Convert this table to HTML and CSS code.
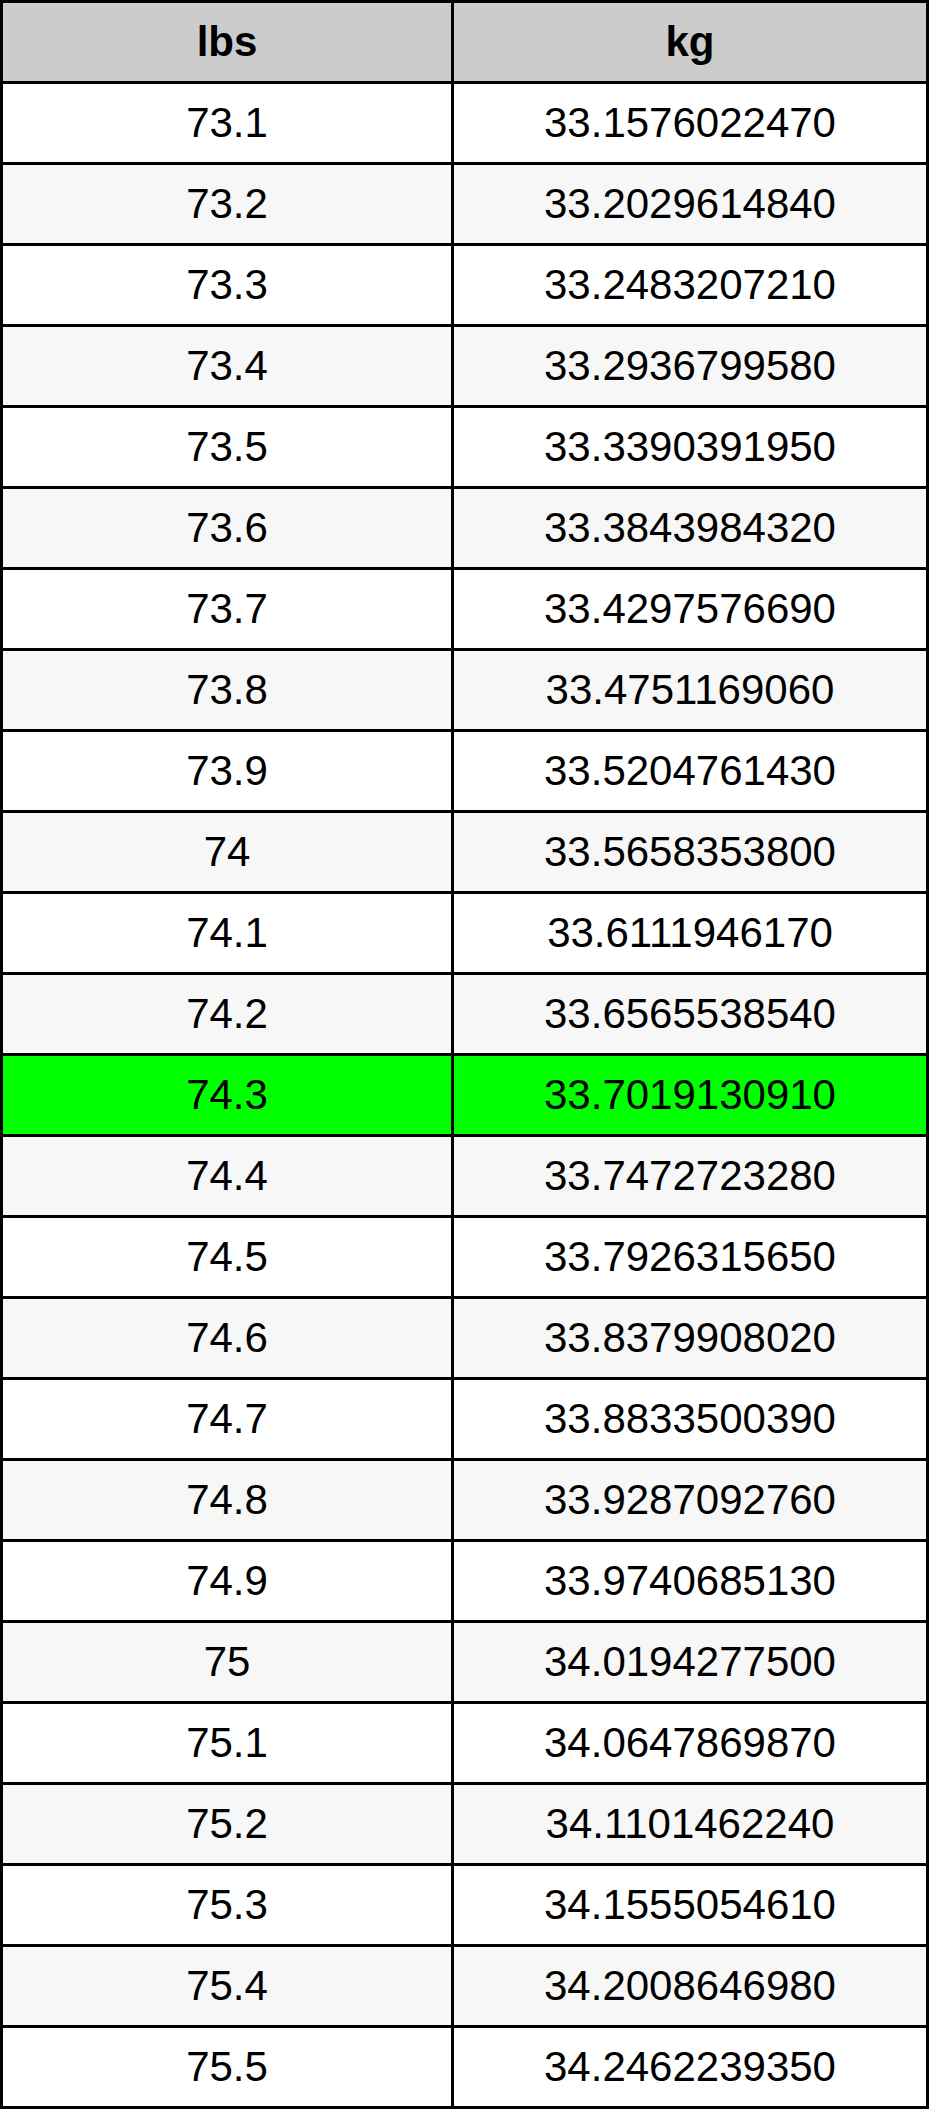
FILE: index.html
```html
<!DOCTYPE html>
<html>
<head>
<meta charset="utf-8">
<link rel="stylesheet" href="styles.css">
</head>
<body>
<table class="conv">
<thead>
<tr><th class="c1">lbs</th><th class="c2">kg</th></tr>
</thead>
<tbody>
<tr><td>73.1</td><td>33.1576022470</td></tr>
<tr class="alt"><td>73.2</td><td>33.2029614840</td></tr>
<tr><td>73.3</td><td>33.2483207210</td></tr>
<tr class="alt"><td>73.4</td><td>33.2936799580</td></tr>
<tr><td>73.5</td><td>33.3390391950</td></tr>
<tr class="alt"><td>73.6</td><td>33.3843984320</td></tr>
<tr><td>73.7</td><td>33.4297576690</td></tr>
<tr class="alt"><td>73.8</td><td>33.4751169060</td></tr>
<tr><td>73.9</td><td>33.5204761430</td></tr>
<tr class="alt"><td>74</td><td>33.5658353800</td></tr>
<tr><td>74.1</td><td>33.6111946170</td></tr>
<tr class="alt"><td>74.2</td><td>33.6565538540</td></tr>
<tr class="hl"><td>74.3</td><td>33.7019130910</td></tr>
<tr class="alt"><td>74.4</td><td>33.7472723280</td></tr>
<tr><td>74.5</td><td>33.7926315650</td></tr>
<tr class="alt"><td>74.6</td><td>33.8379908020</td></tr>
<tr><td>74.7</td><td>33.8833500390</td></tr>
<tr class="alt"><td>74.8</td><td>33.9287092760</td></tr>
<tr><td>74.9</td><td>33.9740685130</td></tr>
<tr class="alt"><td>75</td><td>34.0194277500</td></tr>
<tr><td>75.1</td><td>34.0647869870</td></tr>
<tr class="alt"><td>75.2</td><td>34.1101462240</td></tr>
<tr><td>75.3</td><td>34.1555054610</td></tr>
<tr class="alt"><td>75.4</td><td>34.2008646980</td></tr>
<tr><td>75.5</td><td>34.2462239350</td></tr>
</tbody>
</table>
</body>
</html>
```
FILE: styles.css
```css
html, body {
  margin: 0;
  padding: 0;
  background: #ffffff;
}
.conv {
  border-collapse: separate;
  border-spacing: 0;
  border-top: 3px solid #000;
  border-left: 3px solid #000;
  table-layout: fixed;
  width: 929px;
  font-family: "Liberation Sans", Arial, sans-serif;
  font-size: 42px;
  color: #000;
}
.conv th, .conv td {
  box-sizing: border-box;
  height: 81px;
  padding: 0;
  text-align: center;
  vertical-align: middle;
  border-right: 3px solid #000;
  border-bottom: 3px solid #000;
  line-height: 1;
}
.conv th {
  background: #cccccc;
  font-weight: bold;
}
.conv .c1 { width: 451px; }
.conv .c2 { width: 475px; }
.conv tr.alt td { background: #f7f7f7; }
.conv tr.hl td { background: #00ff00; }
```
